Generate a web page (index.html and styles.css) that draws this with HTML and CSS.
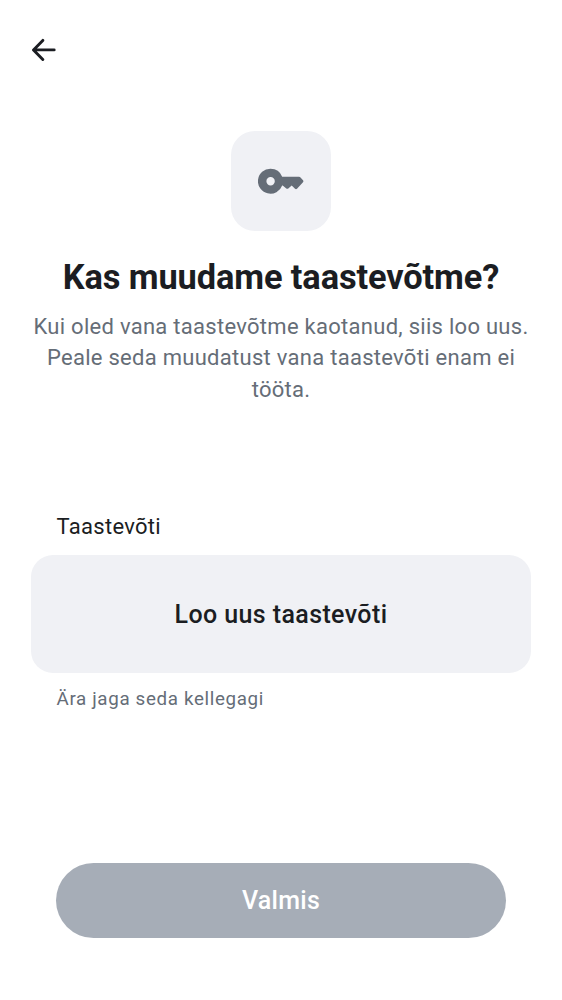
FILE: index.html
```html
<!DOCTYPE html>
<html lang="et">
<head>
<meta charset="utf-8">
<title>Taastevõti</title>
<link rel="stylesheet" href="styles.css">
</head>
<body>
<main class="screen">
  <header class="topbar">
    <button class="back" aria-label="Tagasi">
      <svg class="back-icon" viewBox="0 0 25 23" fill="none" stroke="#1b1d22" stroke-width="2.9" stroke-linecap="round" stroke-linejoin="round"><path d="M23.2 11.9H2.700M11.800 2.400 2.500 11.900l9.300 9.500"/></svg>
    </button>
  </header>
  <section class="intro">
    <div class="tile">
      <svg class="key-icon" viewBox="0 0 46 26"><path fill="#656d77" fill-rule="evenodd" d="M12.500.7a12.500 12.500 0 1 0 11.700 16.700h.5l3.600 3q1 .8 2 0l3.400-2.900 3.300 3.200q1 .9 2 0l6-6.500q.8-1 0-1.900l-2.500-2.800q-.6-.7-1.500-.7H24.200A12.500 12.500 0 0 0 12.500.7ZM12.600 9a4.200 4.200 0 1 1 0 8.400 4.200 4.200 0 0 1 0-8.400Z"/></svg>
    </div>
    <h1 class="title">Kas muudame taastevõtme?</h1>
    <p class="text">Kui oled vana taastevõtme kaotanud, siis loo uus.<br>Peale seda muudatust vana taastevõti enam ei<br>tööta.</p>
  </section>
  <section class="recovery">
    <h2 class="label">Taastevõti</h2>
    <button class="create">Loo uus taastevõti</button>
    <p class="hint">Ära jaga seda kellegagi</p>
  </section>
  <footer class="footer"><button class="done">Valmis</button></footer>
</main>
</body>
</html>
```
FILE: styles.css
```css
* { box-sizing: border-box; }
body { margin: 0; background: #fff; font-family: Roboto, sans-serif; color: #1b1d22; }
button { border: 0; padding: 0; margin: 0; font: inherit; color: inherit; }
h1, h2, p { margin: 0; }
.screen { width: 562px; height: 1000px; display: flex; flex-direction: column; }
.topbar { height: 100px; padding: 38px 31px; }
.back { display: block; background: none; }
.back-icon { display: block; width: 25px; height: 23px; }
.intro { display: flex; flex-direction: column; align-items: center; padding-top: 31px; }
.tile { width: 100px; height: 100px; border-radius: 24px; background: #f0f1f5; display: flex; align-items: center; justify-content: center; }
.key-icon { width: 46px; height: 26px; }
.title { margin-top: 25px; font-size: 34.4px; line-height: 42px; font-weight: 700; letter-spacing: -0.12px; white-space: nowrap; }
.text { margin-top: 13px; font-size: 22px; line-height: 31.25px; letter-spacing: 0.28px; color: #656d77; text-align: center; white-space: nowrap; }
.recovery { margin: 106px 31px 0; display: flex; flex-direction: column; }
.label { padding-left: 25.500px; font-size: 22px; line-height: 31px; font-weight: 400; letter-spacing: 0.3px; }
.create { margin-top: 13px; padding-top: 1px; height: 118px; border-radius: 22px; background: #f0f1f5; font-size: 25px; font-weight: 500; letter-spacing: 0.39px; }
.hint { margin-top: 14px; padding-left: 25.500px; font-size: 18.75px; line-height: 25px; letter-spacing: 0.66px; color: #656d77; }
.footer { margin-top: auto; padding: 0 56px 62.500px; }
.done { display: block; width: 450px; height: 75px; border-radius: 38px; background: #a6adb7; color: #fff; font-size: 25px; font-weight: 500; letter-spacing: 0.3px; }
```
